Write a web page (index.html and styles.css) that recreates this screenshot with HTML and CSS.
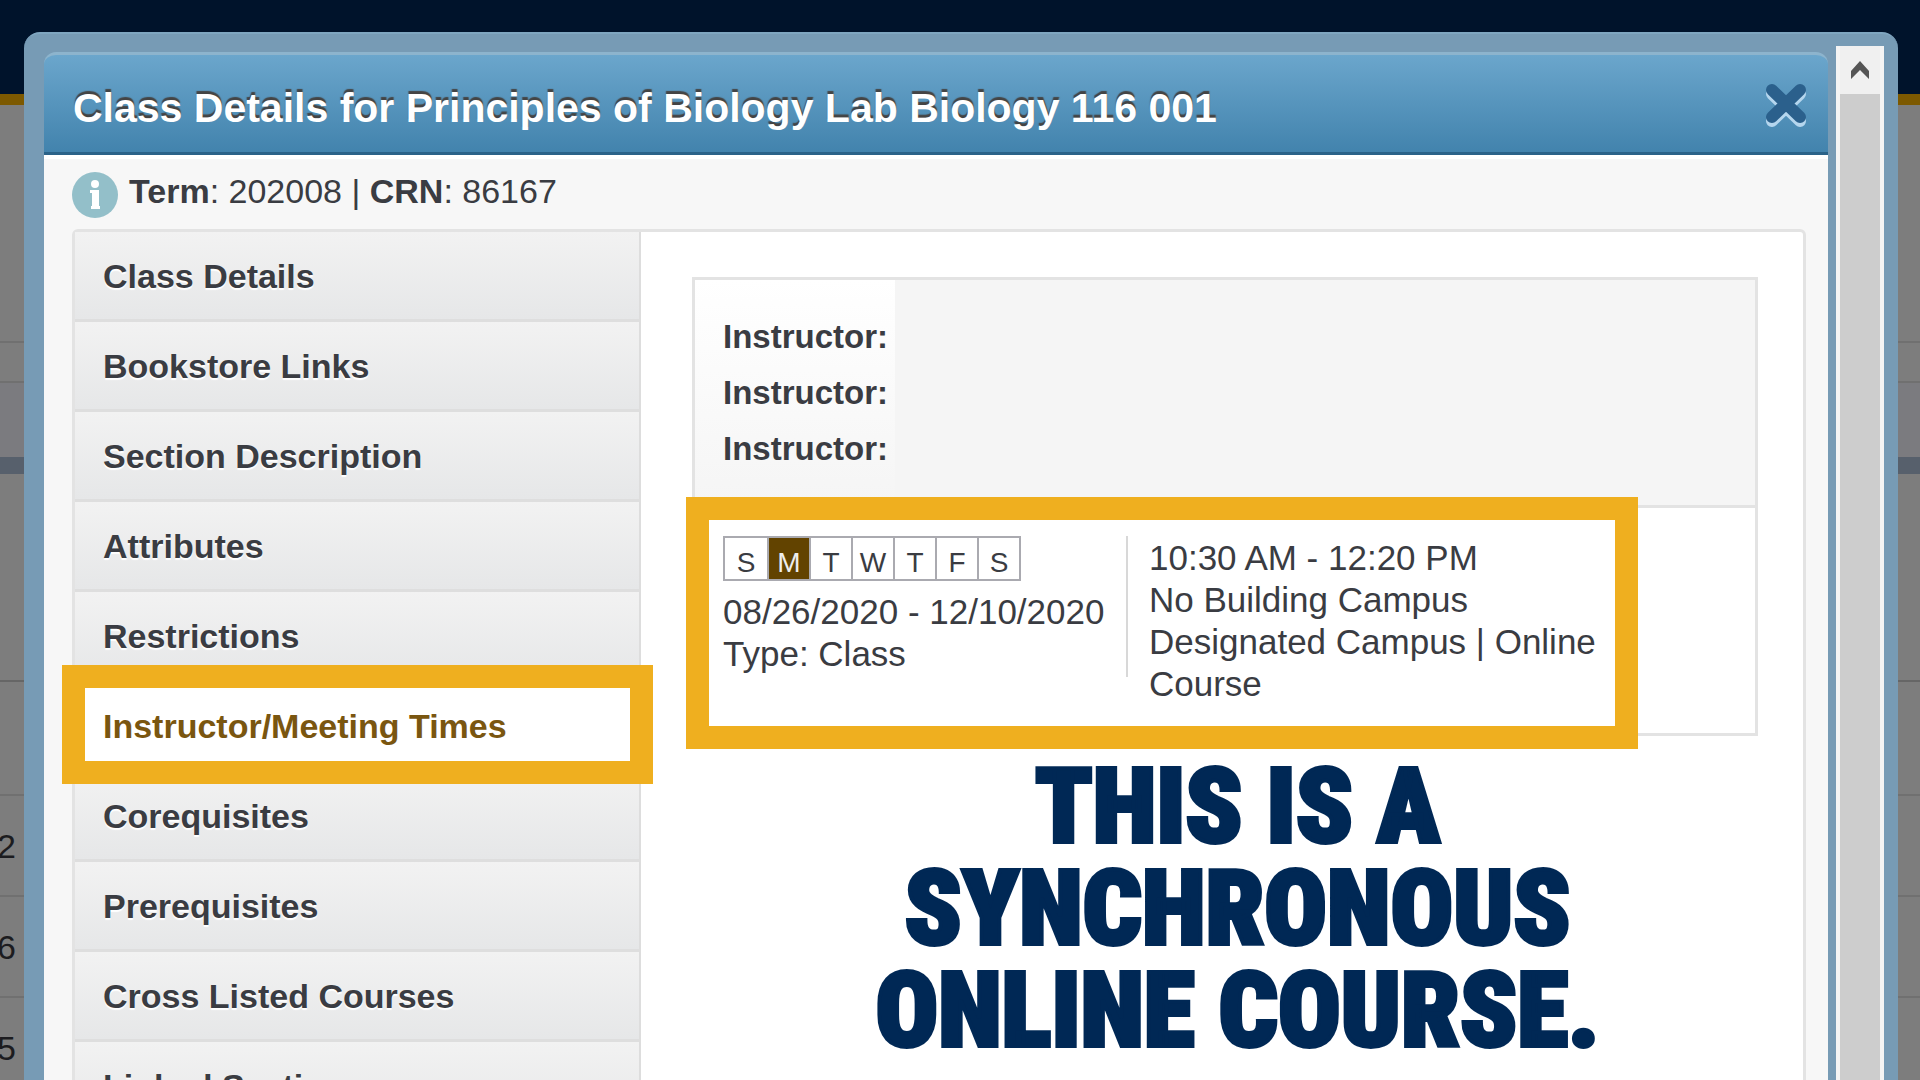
FILE: index.html
```html
<!DOCTYPE html>
<html lang="en">
<head>
    <meta charset="UTF-8">
    <meta name="viewport" content="width=device-width, initial-scale=1.0">
    <title>Class Details</title>
    <link rel="stylesheet" href="styles.css">
</head>
<body>
    <!-- Dimmed page behind the dialog -->
    <div class="backdrop">
        <div class="topbar"></div>
        <div class="row row-title"></div>
        <div class="row row-tabs"></div>
        <div class="row row-head"></div>
        <div class="row row-first"></div>
        <div class="row row-second"></div>
        <div class="row"><span class="cell">2</span></div>
        <div class="row"><span class="cell">6</span></div>
        <div class="row"><span class="cell">5</span></div>
    </div>

    <div class="dialog" role="dialog" aria-labelledby="dialogTitle">
        <div class="dialog-main">
            <header class="dialog-header">
                <h1 id="dialogTitle">Class Details for Principles of Biology Lab Biology 116 001</h1>
                <button class="close" type="button" aria-label="Close">
                    <svg width="44" height="48" viewBox="0 0 44 48" fill="none" stroke-width="12" stroke-linecap="round">
                        <path d="M8 14L36 41M36 14L8 41" stroke="#b5d6ee"/>
                        <path d="M8 10L36 37M36 10L8 37" stroke="#2b608c"/>
                    </svg>
                </button>
            </header>

            <div class="dialog-body">
                <p class="term">
                    <svg width="46" height="46" viewBox="0 0 46 46">
                        <circle cx="23" cy="23" r="23" fill="#93bfc9"/>
                        <circle cx="23" cy="12" r="4" fill="#fff"/>
                        <path d="M18 18H27V34H28V37H19V34H20V21H18Z" fill="#fff"/>
                    </svg>
                    <span><b>Term</b>: 202008 | <b>CRN</b>: 86167</span>
                </p>

                <div class="details">
                    <nav class="tabs">
                        <a href="#">Class Details</a>
                        <a href="#">Bookstore Links</a>
                        <a href="#">Section Description</a>
                        <a href="#">Attributes</a>
                        <a href="#">Restrictions</a>
                        <a href="#" class="active">Instructor/Meeting Times</a>
                        <a href="#">Corequisites</a>
                        <a href="#">Prerequisites</a>
                        <a href="#">Cross Listed Courses</a>
                        <a href="#">Linked Sections</a>
                    </nav>

                    <section class="panel">
                        <div class="card">
                            <div class="instructors">
                                <div class="names">
                                    <p>Instructor:</p>
                                    <p>Instructor:</p>
                                    <p>Instructor:</p>
                                </div>
                            </div>
                            <div class="meeting">
                                <div class="when">
                                    <ul class="days">
                                        <li>S</li>
                                        <li class="on">M</li>
                                        <li>T</li>
                                        <li>W</li>
                                        <li>T</li>
                                        <li>F</li>
                                        <li>S</li>
                                    </ul>
                                    <p>08/26/2020 - 12/10/2020</p>
                                    <p>Type: Class</p>
                                </div>
                                <div class="where">
                                    <p>10:30 AM - 12:20 PM</p>
                                    <p>No Building Campus</p>
                                    <p>Designated Campus | Online Course</p>
                                </div>
                            </div>
                        </div>
                        <h2 class="callout">THIS IS A<br>SYNCHRONOUS<br>ONLINE COURSE.</h2>
                    </section>
                </div>
            </div>
        </div>

        <div class="scrollbar">
            <button class="scroll-up" type="button" aria-label="Scroll up">
                <svg width="24" height="20" viewBox="0 0 24 20">
                    <path d="M12 1L21 11V19L12 10L3 19V11Z" fill="#555"/>
                </svg>
            </button>
        </div>
    </div>
</body>
</html>
```

FILE: styles.css
```css
* {
    box-sizing: border-box;
}
body {
    margin: 0;
    height: 100vh;
    padding: 32px 22px 0 24px;
    overflow: hidden;
    font-family: "Liberation Sans", Arial, sans-serif;
    font-size: 34px;
    line-height: 42px;
    color: #3a3c42;
    background-color: #7d7d7d;
}
h1, h2, p, ul {
    margin: 0;
    padding: 0;
}

/* page behind */
.backdrop {
    position: absolute;
    inset: 0;
    overflow: hidden;
}
.topbar {
    height: 105px;
    background-color: #00132b;
    border-bottom: 11px solid #7d5900;
}
.row {
    display: flex;
    align-items: center;
    height: 101px;
    border-bottom: 2px solid #707070;
    color: #1c1c20;
}
.row-title {
    height: 238px;
}
.row-tabs {
    height: 40px;
}
.row-head {
    height: 91px;
    background-color: #7b7b7f;
    border-bottom: 17px solid #57606c;
}
.row-first {
    height: 208px;
    border-color: #666;
}
.row-second {
    height: 114px;
}
.cell {
    display: flex;
    justify-content: flex-end;
    width: 16px;
}

/* dialog frame */
.dialog {
    position: relative;
    display: flex;
    gap: 8px;
    min-height: 100%;
    padding: 12px 14px 0 20px;
    background-color: #779bb5;
    border-top: 2px solid #7fa6c0;
    border-radius: 16px 16px 0 0;
}
.dialog-main {
    flex: 1;
    margin-top: 6px;
}
.dialog-header {
    display: flex;
    align-items: center;
    justify-content: space-between;
    height: 103px;
    padding: 0 20px 0 29px;
    background-image: linear-gradient(#6ba6cc, #4283ad);
    border-top: 3px solid #8db4cd;
    border-bottom: 3px solid #2a6288;
    border-radius: 12px 12px 0 0;
}
.dialog-header h1 {
    padding-top: 8px;
    font-size: 41px;
    color: #fff;
    text-shadow: 0 -3px 1px #444;
}
button {
    display: flex;
    align-items: center;
    justify-content: center;
    padding: 0;
    border: none;
    background: none;
}
.dialog-body {
    height: 100%;
    padding: 11px 22px 0 28px;
    background-color: #f7f7f7;
    border-top: 4px solid #fff;
}
.term {
    display: flex;
    align-items: flex-start;
    gap: 11px;
    height: 59px;
}
.term svg {
    margin-top: 2px;
}
.details {
    display: flex;
    background-color: #fff;
    border: 3px solid #e3e3e3;
    border-radius: 6px 6px 0 0;
}

/* tabs on the left, panel on the right */
.tabs {
    flex: 0 0 566px;
    border-right: 2px solid #ddd;
}
.tabs a {
    position: relative;
    display: flex;
    align-items: center;
    height: 90px;
    padding-left: 28px;
    color: #3a3c42;
    font-weight: bold;
    text-decoration: none;
    text-shadow: 0 2px 1px #fff;
    background-image: linear-gradient(#f2f2f2, #e6e7e8);
    border-bottom: 3px solid #dedede;
}
.tabs .active {
    color: #7a5610;
    background: #fff;
}
.tabs .active::after,
.meeting::after {
    content: "";
    position: absolute;
    border: 23px solid #efaf1f;
}
.tabs .active::after {
    inset: -17px -14px -15px -13px;
    z-index: 1;
}
.panel {
    flex: 1;
    padding: 45px 45px 0 51px;
}
.card {
    border: 3px solid #e3e3e3;
}
.instructors {
    height: 228px;
    background-color: #f5f5f5;
    border-bottom: 3px solid #e3e3e3;
}
.names {
    width: 200px;
    height: 100%;
    padding: 29px 0 0 28px;
    font-size: 33px;
    font-weight: bold;
    line-height: 56px;
    background-image: linear-gradient(#fff, #f5f5f5);
}
.meeting {
    position: relative;
    display: flex;
    height: 225px;
    padding: 28px 130px 0 28px;
    font-size: 35px;
}
.meeting::after {
    inset: -11px 117px -16px -9px;
}
.when {
    flex: 0 0 405px;
    height: 141px;
    border-right: 2px solid #d8d8d8;
}
.days {
    display: flex;
    width: max-content;
    height: 45px;
    margin-bottom: 10px;
    border: 2px solid #aaaab0;
    list-style: none;
    font-size: 28px;
    line-height: 50px;
}
.days li {
    width: 42px;
    text-align: center;
    border-left: 2px solid #aaaab0;
}
.days li:first-child {
    border-left: none;
}
.days .on {
    color: #eee;
    background-color: #624300;
}
.where {
    flex: 1;
    padding: 1px 0 0 21px;
}
.callout {
    padding: 20px 0 20px 25px;
    font-family: "Roboto Condensed", Roboto, sans-serif;
    font-size: 104px;
    font-weight: 900;
    line-height: 102px;
    text-align: center;
    color: #002855;
    -webkit-text-stroke: 4px #002855;
}

/* scrollbar */
.scrollbar {
    width: 48px;
    background-color: #cdcdcd;
    border: 4px solid #f4f4f4;
    border-top: none;
}
.scroll-up {
    width: 100%;
    height: 48px;
    background-color: #f0f0f0;
}
```
